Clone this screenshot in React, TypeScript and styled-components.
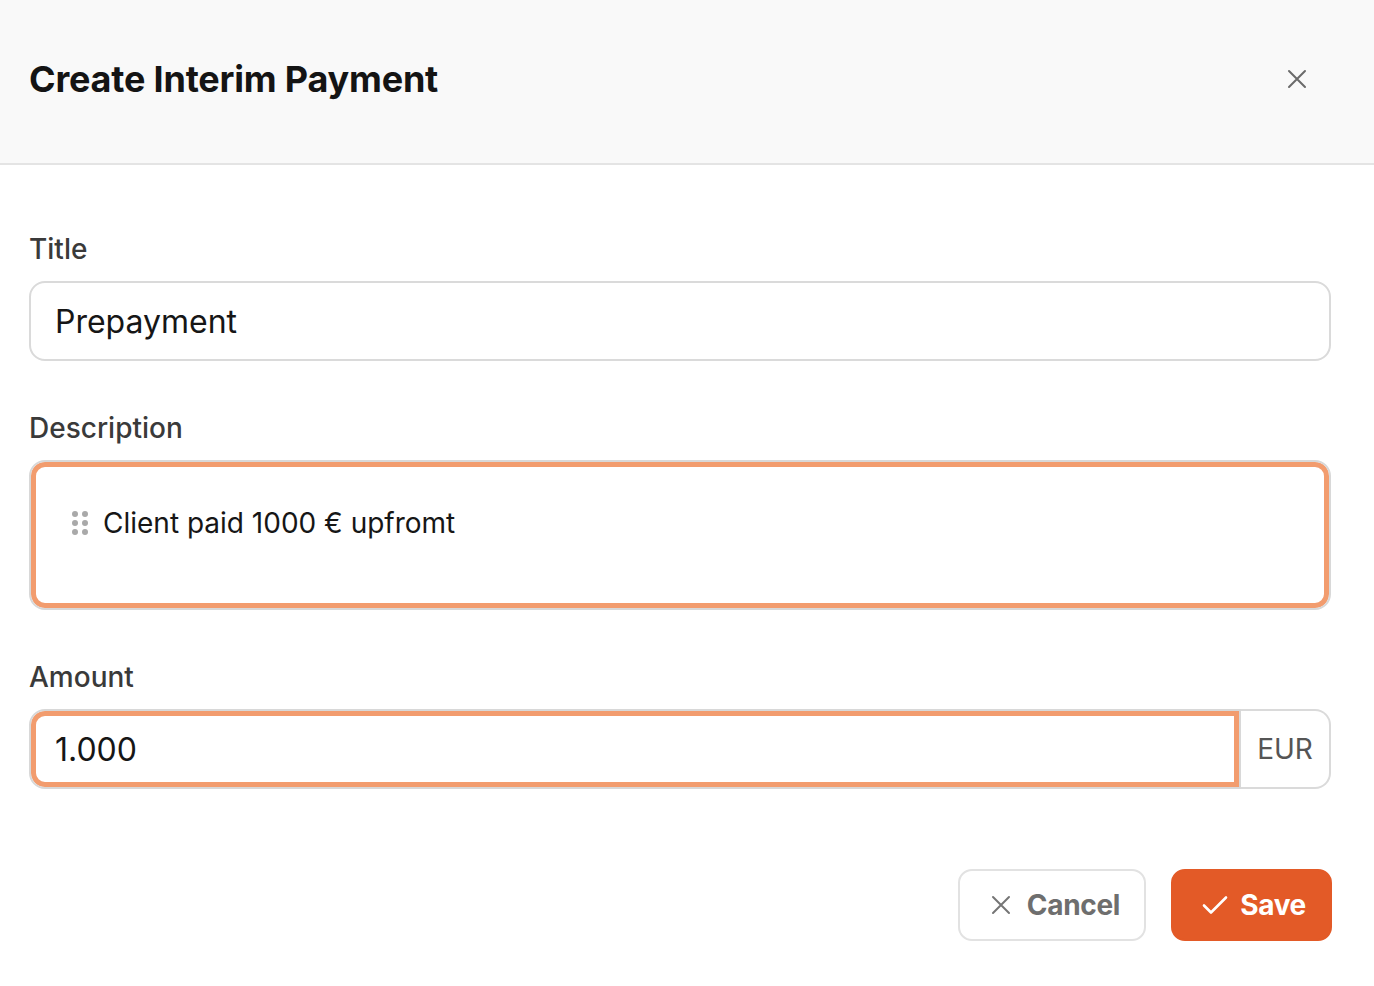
import React from "react";
import styled, { createGlobalStyle } from "styled-components";

const GlobalStyle = createGlobalStyle`
  html, body { margin: 0; padding: 0; background: #fff; }
  body { font-family: Inter, "Noto Sans", sans-serif; color: #161616; }
`;

const CloseIcon = ({ size = 20, color = "#6b6b6b", width = 2 }: { size?: number; color?: string; width?: number }) => (
  <svg width={size} height={size} viewBox="0 0 20 20" fill="none">
    <path d="M2 2L18 18M18 2L2 18" stroke={color} strokeWidth={width} strokeLinecap="round" />
  </svg>
);

const CheckIcon = () => (
  <svg width="26" height="20" viewBox="0 0 26 20" fill="none">
    <path d="M2 10.5L9 17.5L24 2.5" stroke="#fff" strokeWidth="2.6" strokeLinecap="round" strokeLinejoin="round" />
  </svg>
);

const DragHandle = () => (
  <svg width="18" height="26" viewBox="0 0 18 26">
    {[4, 13, 22].map((y) => (
      <React.Fragment key={y}>
        <circle cx="4" cy={y} r="3" fill="#a9a9a9" />
        <circle cx="14" cy={y} r="3" fill="#a9a9a9" />
      </React.Fragment>
    ))}
  </svg>
);

export default function App() {
  return (
    <>
      <GlobalStyle />
      <Dialog>
        <Header>
          <Heading>Create Interim Payment</Heading>
          <CloseButton aria-label="Close">
            <CloseIcon />
          </CloseButton>
        </Header>
        <Body>
          <Field>
            <Label>Title</Label>
            <TextInput>Prepayment</TextInput>
          </Field>
          <Field>
            <Label>Description</Label>
            <Editor>
              <Paragraph>
                <DragHandle />
                <span>Client paid 1000 € upfromt</span>
              </Paragraph>
            </Editor>
          </Field>
          <Field>
            <Label>Amount</Label>
            <InputGroup>
              <AmountInput>1.000</AmountInput>
              <Addon>EUR</Addon>
            </InputGroup>
          </Field>
        </Body>
        <Footer>
          <Button variant="secondary">
            <CloseIcon size={20} color="#757575" width={2} />
            Cancel
          </Button>
          <Button variant="primary">
            <CheckIcon />
            Save
          </Button>
        </Footer>
      </Dialog>
    </>
  );
}

const Dialog = styled.div`
  width: 1374px;
  min-height: 986px;
  background: #fff;
`;

const Header = styled.div`
  height: 165px;
  background: #f9f9f9;
  border-bottom: 2px solid #e4e4e4;
  box-sizing: border-box;
  display: flex;
  align-items: center;
  justify-content: space-between;
  padding: 0 67px 6px 29px;
`;

const Heading = styled.h1`
  margin: 0;
  font-size: 36px;
  font-weight: 700;
  letter-spacing: -0.2px;
  color: #141414;
`;

const CloseButton = styled.button`
  border: none;
  background: none;
  padding: 0;
  display: flex;
  cursor: pointer;
`;

const Body = styled.div`
  padding: 67px 43px 0 29px;
  display: flex;
  flex-direction: column;
  gap: 50px;
`;

const Field = styled.div`
  display: flex;
  flex-direction: column;
  gap: 15px;
`;

const Label = styled.label`
  font-size: 28px;
  font-weight: 500;
  color: #3a3a3a;
  line-height: 34px;
`;

const TextInput = styled.div`
  height: 80px;
  box-sizing: border-box;
  border: 2px solid #dadada;
  border-radius: 16px;
  display: flex;
  align-items: center;
  padding: 0 24px;
  font-size: 32px;
  color: #161616;
`;

const Editor = styled.div`
  height: 150px;
  box-sizing: border-box;
  border: 2px solid #d8d8d8;
  border-radius: 16px;
  box-shadow: inset 0 0 0 5px #f29c6e;
  padding: 44px 40px;
`;

const Paragraph = styled.div`
  display: flex;
  align-items: center;
  gap: 14px;
  font-size: 28px;
  color: #161616;
`;

const InputGroup = styled.div`
  display: flex;
  height: 80px;
`;

const AmountInput = styled.div`
  flex: 1;
  box-sizing: border-box;
  border: 2px solid #d8d8d8;
  border-radius: 16px 0 0 16px;
  box-shadow: inset 0 0 0 5px #f29c6e;
  display: flex;
  align-items: center;
  padding: 0 24px;
  font-size: 32px;
  color: #161616;
`;

const Addon = styled.div`
  width: 90px;
  box-sizing: border-box;
  border: 2px solid #dadada;
  border-left: none;
  border-radius: 0 16px 16px 0;
  display: flex;
  align-items: center;
  justify-content: center;
  font-size: 28px;
  color: #555;
`;

const Footer = styled.div`
  display: flex;
  justify-content: flex-end;
  gap: 25px;
  padding: 80px 42px 0 0;
`;

const Button = styled.button<{ variant: "primary" | "secondary" }>`
  height: 72px;
  box-sizing: border-box;
  display: flex;
  align-items: center;
  gap: ${(p) => (p.variant === "primary" ? "12px" : "16px")};
  padding: ${(p) => (p.variant === "primary" ? "0 24px 0 29px" : "0 24px 0 31px")};
  border-radius: 14px;
  font-family: inherit;
  font-size: 28px;
  font-weight: 700;
  letter-spacing: -0.3px;
  cursor: pointer;
  border: 2px solid ${(p) => (p.variant === "primary" ? "#e35a27" : "#e2e2e2")};
  background: ${(p) => (p.variant === "primary" ? "#e35a27" : "#fff")};
  color: ${(p) => (p.variant === "primary" ? "#fff" : "#6e6e6e")};
`;
